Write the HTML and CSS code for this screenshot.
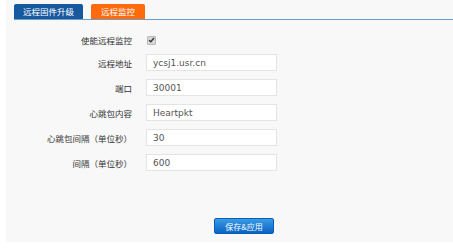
FILE: index.html
```html
<!DOCTYPE html>
<html lang="zh-CN">
<head>
  <meta charset="UTF-8" />
  <title>远程监控</title>
  <link rel="stylesheet" href="styles.css">
</head>
<body>

<div class="panel">
  <div class="tabs">
    <a href="#" class="tab tab-blue">远程固件升级</a>
    <a href="#" class="tab tab-orange">远程监控</a>
  </div>

  <form class="form" onsubmit="return false">
    <label class="label">使能远程监控</label>
    <div class="check-cell">
      <span class="check">
        <svg width="7" height="6" viewBox="0 0 7 6"><path d="M1 3.2 L2.8 4.8 L6 1" fill="none" stroke="#333" stroke-width="1.4"/></svg>
      </span>
    </div>

    <label class="label">远程地址</label>
    <input type="text" class="field" value="ycsj1.usr.cn" />

    <label class="label">端口</label>
    <input type="text" class="field" value="30001" />

    <label class="label">心跳包内容</label>
    <input type="text" class="field" value="Heartpkt" />

    <label class="label">心跳包间隔（单位秒）</label>
    <input type="text" class="field" value="30" />

    <label class="label">间隔（单位秒）</label>
    <input type="text" class="field" value="600" />
  </form>

  <button type="button" class="save-btn">保存&amp;应用</button>
</div>

</body>
</html>
```

FILE: styles.css
```css
body {
  margin: 0;
  padding: 0;
  background: #ffffff;
  font-family: "DejaVu Sans", "Noto Sans CJK SC", sans-serif;
}

.panel {
  margin-left: 6px;
  height: 242px;
  padding-top: 4px;
  box-sizing: border-box;
  background: #f8f8f8;
}

.tabs {
  display: flex;
  gap: 8px;
  margin-left: 8px;
  border-bottom: 1px solid #6f9dc9;
}

.tab {
  display: block;
  height: 15px;
  line-height: 15px;
  padding: 0 9px;
  font-family: "Noto Sans CJK SC", sans-serif;
  font-size: 8.5px;
  color: #ffffff;
  text-decoration: none;
  border-radius: 2px 2px 0 0;
}

.tab-blue {
  background: #17599f;
}

.tab-orange {
  background: #ff6a0d;
  padding: 0 10px;
}

.form {
  display: grid;
  grid-template-columns: 126px 131px;
  grid-auto-rows: 17px;
  grid-template-rows: 12px;
  column-gap: 14px;
  row-gap: 8px;
  margin-top: 14px;
}

.label {
  font-family: "Noto Sans CJK SC", sans-serif;
  font-size: 8.5px;
  color: #333333;
  text-align: right;
  align-self: center;
  white-space: nowrap;
}

.check-cell {
  display: flex;
  align-items: center;
}

.check {
  display: flex;
  align-items: center;
  justify-content: center;
  width: 7px;
  height: 7px;
  margin-left: 1px;
  background: #d8d8d8;
  border: 1px solid #bbbbbb;
  border-radius: 1px;
}

.field {
  width: 100%;
  height: 17px;
  box-sizing: border-box;
  margin: 0;
  padding: 0 6px;
  border: 1px solid #e4e4e4;
  background: #ffffff;
  font-family: "DejaVu Sans", sans-serif;
  font-size: 9px;
  color: #555555;
  outline: none;
}

.save-btn {
  display: block;
  width: 60px;
  height: 16px;
  margin: 47px 0 0 208px;
  padding: 0;
  border: 1px solid #0b5fb5;
  border-radius: 2px;
  background: linear-gradient(to bottom, #3a9be6, #0a64c2);
  font-family: "Noto Sans CJK SC", sans-serif;
  font-size: 8px;
  color: #ffffff;
  cursor: pointer;
}
```
